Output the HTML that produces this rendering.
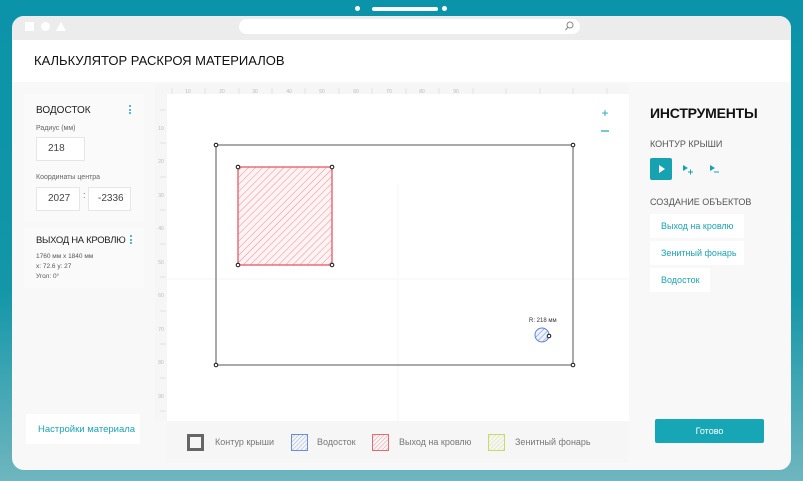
<!DOCTYPE html>
<html><head><meta charset="utf-8"><style>
*{box-sizing:border-box;margin:0;padding:0}
body{width:803px;height:481px;overflow:hidden;font-family:"Liberation Sans",sans-serif;background:linear-gradient(180deg,#0b93a9 0%,#1296a8 60%,#6fb6bf 100%);position:relative}
.pill{position:absolute;top:7px;height:4px;background:#fff;border-radius:2px}
.win{position:absolute;left:12px;top:16px;width:779px;height:454px;background:#f8f8f8;border-radius:12px;overflow:hidden}
.top{position:absolute;left:0;top:0;width:779px;height:24px;background:#ececec}
.search{position:absolute;left:227px;top:3px;width:341px;height:15px;background:#fff;border-radius:8px}
.hdr{position:absolute;left:0;top:24px;width:779px;height:42px;background:#fff}
.hdr h1{position:absolute;left:22px;top:13px;font-size:13px;font-weight:normal;color:#111}
.card{position:absolute;background:#fafafa}
.t{position:absolute;white-space:nowrap}
.inp{position:absolute;background:#fff;border:1px solid #e6e6e6;font-size:10px;color:#444;line-height:22px}
.dots{position:absolute;width:2px}
.dots i{display:block;width:2px;height:2px;background:#21a6b2;margin-bottom:1.5px;border-radius:1px}
.lnk{color:#1aa3b3;font-size:9.5px}
</style></head><body>
<div class="pill" style="left:355px;width:5px;height:5px;border-radius:50%;top:6px"></div>
<div class="pill" style="left:372px;width:66px"></div>
<div class="pill" style="left:442px;width:5px;height:5px;border-radius:50%;top:6px"></div>
<div class="win">
 <div class="top">
  <div style="position:absolute;left:13px;top:6px;width:9px;height:9px;background:#fff"></div>
  <div style="position:absolute;left:29px;top:6px;width:9px;height:9px;background:#fff;border-radius:50%"></div>
  <div style="position:absolute;left:44px;top:6px;width:0;height:0;border-left:5px solid transparent;border-right:5px solid transparent;border-bottom:9px solid #fff"></div>
  <div class="search"><svg style="position:absolute;right:6px;top:2px" width="10" height="10" viewBox="0 0 10 10"><circle cx="6" cy="4" r="3" fill="none" stroke="#888"/><path d="M4 6L1.5 9" stroke="#888"/></svg></div>
 </div>
 <div class="hdr"><h1>КАЛЬКУЛЯТОР РАСКРОЯ МАТЕРИАЛОВ</h1></div>

 <div class="card" style="left:12px;top:78px;width:120px;height:128px">
  <div class="t" style="left:12px;top:11px;font-size:10px;color:#222">ВОДОСТОК</div>
  <div class="dots" style="left:105px;top:11px"><i></i><i></i><i></i></div>
  <div class="t" style="left:12px;top:31px;font-size:7px;color:#666">Радиус (мм)</div>
  <div class="inp" style="left:12px;top:43px;width:49px;height:24px;padding-left:11px">218</div>
  <div class="t" style="left:12px;top:80px;font-size:7px;color:#666">Координаты центра</div>
  <div class="inp" style="left:12px;top:93px;width:44px;height:24px;padding-left:11px">2027</div>
  <div class="t" style="left:59px;top:96px;font-size:9px;color:#666">:</div>
  <div class="inp" style="left:64px;top:93px;width:43px;height:24px;padding-left:9px">-2336</div>
 </div>
 <div class="card" style="left:12px;top:212px;width:120px;height:60px">
  <div class="t" style="left:12px;top:7px;font-size:9.5px;color:#222;letter-spacing:-0.3px">ВЫХОД НА КРОВЛЮ</div>
  <div class="dots" style="left:106px;top:7px"><i></i><i></i><i></i></div>
  <div class="t" style="left:12px;top:25px;font-size:6.5px;color:#555">1760 мм x 1840 мм</div>
  <div class="t" style="left:12px;top:35px;font-size:6.5px;color:#555">x: 72.6 y: 27</div>
  <div class="t" style="left:12px;top:45px;font-size:6.5px;color:#555">Угол: 0°</div>
 </div>
 <div class="card" style="left:14px;top:398px;width:114px;height:30px;background:#fff">
  <div class="t lnk" style="left:12px;top:10px">Настройки материала</div>
 </div>

 <svg style="position:absolute;left:143px;top:68px" width="474" height="337" viewBox="0 0 474 337">
  <rect x="0" y="0" width="474" height="337" fill="#f6f6f6"/>
  <rect x="12" y="10" width="462" height="327" fill="#fff"/>
  <g stroke="#ddd" stroke-width="0.7">
   <path d="M17 4V10M50 4V10M84 4V10M117 4V10M150 4V10M184 4V10M217 4V10M251 4V10M284 4V10M318 4V10M351 4V10M385 4V10M418 4V10M452 4V10"/>
   <path d="M5 26H11M5 59H11M5 93H11M5 126H11M5 160H11M5 193H11M5 227H11M5 260H11M5 294H11M5 327H11"/>
  </g>
  <g fill="#bbb" font-size="5" font-family="Liberation Sans" text-anchor="middle">
   <text x="33" y="9">10</text><text x="67" y="9">20</text><text x="100" y="9">30</text><text x="134" y="9">40</text><text x="167" y="9">50</text><text x="201" y="9">60</text><text x="234" y="9">70</text><text x="267" y="9">80</text><text x="301" y="9">90</text>
   <text x="6" y="46">10</text><text x="6" y="79">20</text><text x="6" y="113">30</text><text x="6" y="146">40</text><text x="6" y="180">50</text><text x="6" y="213">60</text><text x="6" y="247">70</text><text x="6" y="280">80</text><text x="6" y="314">90</text>
  </g>
  <path d="M243 100V337M12 195H474" stroke="#f5f5f5"/>
  <text x="450" y="33" fill="#1aa3b3" font-size="12" text-anchor="middle" font-family="Liberation Sans">+</text>
  <path d="M446 47H454" stroke="#1aa3b3" stroke-width="1.2"/>
  <defs>
   <pattern id="hr" width="5" height="5" patternUnits="userSpaceOnUse" patternTransform="rotate(45)"><path d="M0 0V5" stroke="#ef6f7a" stroke-width="0.8"/></pattern>
   <pattern id="hb" width="4" height="4" patternUnits="userSpaceOnUse" patternTransform="rotate(45)"><path d="M0 0V4" stroke="#5b7fd8" stroke-width="0.9"/></pattern>
  </defs>
  <rect x="61" y="61" width="357" height="220" fill="none" stroke="#555" stroke-width="1"/>
  <rect x="83" y="83" width="94" height="98" fill="#fff3f4" stroke="#e24a5a" stroke-width="1.2"/>
  <rect x="83" y="83" width="94" height="98" fill="url(#hr)"/>
  <g fill="#fff" stroke="#111" stroke-width="1">
   <circle cx="61" cy="61" r="1.8"/><circle cx="418" cy="61" r="1.8"/><circle cx="61" cy="281" r="1.8"/><circle cx="418" cy="281" r="1.8"/>
   <circle cx="83" cy="83" r="1.8"/><circle cx="177" cy="83" r="1.8"/><circle cx="83" cy="181" r="1.8"/><circle cx="177" cy="181" r="1.8"/>
  </g>
  <text x="374" y="238" font-size="6" fill="#333" font-family="Liberation Sans">R: 218 мм</text>
  <circle cx="387" cy="251" r="7" fill="#eef2fc" stroke="#5b7fd8"/>
  <circle cx="387" cy="251" r="7" fill="url(#hb)"/>
  <circle cx="394" cy="252" r="1.8" fill="#fff" stroke="#111"/>
 </svg>

 <div style="position:absolute;left:155px;top:405px;width:461px;height:42px;background:#f6f6f6">
  <div style="position:absolute;left:20px;top:13px;width:17px;height:17px;border:3px solid #666"></div>
  <div class="t" style="left:48px;top:16px;font-size:9px;color:#777">Контур крыши</div>
  <svg style="position:absolute;left:124px;top:13px" width="17" height="17"><defs><pattern id="lb" width="3" height="3" patternUnits="userSpaceOnUse" patternTransform="rotate(45)"><path d="M0 0V3" stroke="#6b8de0" stroke-width="0.7"/></pattern></defs><rect x="0.5" y="0.5" width="16" height="16" fill="url(#lb)" stroke="#6b8de0"/></svg>
  <div class="t" style="left:150px;top:16px;font-size:9px;color:#777">Водосток</div>
  <svg style="position:absolute;left:205px;top:13px" width="17" height="17"><defs><pattern id="lr" width="3" height="3" patternUnits="userSpaceOnUse" patternTransform="rotate(45)"><path d="M0 0V3" stroke="#ea6a72" stroke-width="0.7"/></pattern></defs><rect x="0.5" y="0.5" width="16" height="16" fill="url(#lr)" stroke="#ea6a72"/></svg>
  <div class="t" style="left:232px;top:16px;font-size:9px;color:#777">Выход на кровлю</div>
  <svg style="position:absolute;left:321px;top:13px" width="17" height="17"><defs><pattern id="lg" width="3" height="3" patternUnits="userSpaceOnUse" patternTransform="rotate(45)"><path d="M0 0V3" stroke="#c5dc6a" stroke-width="0.7"/></pattern></defs><rect x="0.5" y="0.5" width="16" height="16" fill="url(#lg)" stroke="#c5dc6a"/></svg>
  <div class="t" style="left:348px;top:16px;font-size:9px;color:#777">Зенитный фонарь</div>
 </div>

 <div class="t" style="left:638px;top:89px;font-size:14px;color:#111;font-weight:bold;letter-spacing:-0.2px">ИНСТРУМЕНТЫ</div>
 <div class="t" style="left:638px;top:123px;font-size:9px;color:#555">КОНТУР КРЫШИ</div>
 <div style="position:absolute;left:638px;top:142px;width:22px;height:22px;background:#17a2b2;border-radius:2px"><svg width="22" height="22"><path d="M9 7L15 11L9 15Z" fill="#fff"/></svg></div>
 <svg style="position:absolute;left:666px;top:142px" width="60" height="22"><path d="M5 7L10 10L5 13Z" fill="#17a2b2"/><path d="M10 14H15M12.5 11.5V16.5" stroke="#17a2b2"/><path d="M32 7L37 10L32 13Z" fill="#17a2b2"/><path d="M36 14H41" stroke="#17a2b2"/></svg>
 <div class="t" style="left:638px;top:181px;font-size:9px;color:#555">СОЗДАНИЕ ОБЪЕКТОВ</div>
 <div class="card" style="left:638px;top:198px;width:94px;height:24px;background:#fff"><div class="t lnk" style="left:11px;top:7px;font-size:9px">Выход на кровлю</div></div>
 <div class="card" style="left:638px;top:225px;width:94px;height:24px;background:#fff"><div class="t lnk" style="left:11px;top:7px;font-size:9px">Зенитный фонарь</div></div>
 <div class="card" style="left:638px;top:252px;width:60px;height:24px;background:#fff"><div class="t lnk" style="left:11px;top:7px;font-size:9px">Водосток</div></div>
 <div style="position:absolute;left:643px;top:403px;width:109px;height:24px;background:#17a6b5;border-radius:2px;color:#fff;font-size:9px;text-align:center;line-height:24px">Готово</div>
</div>
</body></html>
